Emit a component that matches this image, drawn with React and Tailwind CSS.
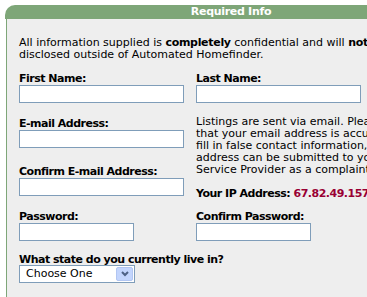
import React from 'react';

const font = { fontFamily: '"DejaVu Sans", Verdana, sans-serif' };

const Field = ({ className = '' }) => (
    <input
        type="text"
        className={`block h-[18px] border border-[#7f9db9] bg-white outline-none ${className}`}
    />
);

const Label = ({ children }) => (
    <div className="font-bold text-[11px] leading-[12px] tracking-[-0.5px] text-black">{children}</div>
);

const App = () => {
    return (
        <div className="w-[367px] h-[297px] overflow-hidden bg-white pt-[5px] pl-[5px]" style={font}>
            <div className="w-[452px]">
                <div className="h-[14px] bg-[#7ea678] rounded-tl-[10px] text-center text-white font-bold text-[11px] leading-[14px] tracking-[-0.3px]">
                    Required Info
                </div>
                <div className="ml-[1px] border-l border-[#7ea678] bg-[#eeeeee] pl-[12px] pt-[18px] pb-[20px] text-[11px] leading-[12px] text-black">
                    <p>
                        All information supplied is <b className="tracking-[-0.3px]">completely</b> confidential and will <b className="tracking-[-0.3px]">not</b> be<br />
                        disclosed outside of Automated Homefinder.
                    </p>

                    {/* name row */}
                    <div className="grid grid-cols-[177px_1fr] mt-[12px]">
                        <div>
                            <Label>First Name:</Label>
                            <Field className="w-[165px]" />
                        </div>
                        <div>
                            <Label>Last Name:</Label>
                            <Field className="w-[165px]" />
                        </div>
                    </div>

                    {/* email row */}
                    <div className="grid grid-cols-[177px_1fr] mt-[13px]">
                        <div className="pt-[2px]">
                            <Label>E-mail Address:</Label>
                            <Field className="w-[165px]" />
                            <div className="mt-[18px]">
                                <Label>Confirm E-mail Address:</Label>
                                <Field className="w-[165px]" />
                            </div>
                        </div>
                        <div>
                            <p className="whitespace-nowrap">
                                Listings are sent via email. Please be sure<br />
                                that your email address is accurate. If you<br />
                                fill in false contact information, your email<br />
                                address can be submitted to your Internet<br />
                                Service Provider as a complaint.
                            </p>
                            <p className="mt-[12px] font-bold tracking-[-0.5px] whitespace-nowrap">
                                Your IP Address: <span className="text-[#990033]">67.82.49.157</span>
                            </p>
                        </div>
                    </div>

                    {/* password row */}
                    <div className="grid grid-cols-[177px_1fr] mt-[11px]">
                        <div>
                            <Label>Password:</Label>
                            <Field className="w-[115px]" />
                        </div>
                        <div>
                            <Label>Confirm Password:</Label>
                            <Field className="w-[115px]" />
                        </div>
                    </div>

                    <div className="mt-[13px]">
                        <Label>What state do you currently live in?</Label>
                        <div className="mt-[-1px] w-[116px] h-[18px] border border-[#7f9db9] bg-white flex items-center justify-between pl-[6px] pr-[1px]">
                            <span className="text-[11px] leading-[12px]">Choose One</span>
                            <span className="w-[17px] h-[14px] bg-[#c3d5fd] border border-[#b2c6f2] rounded-[2px] flex items-center justify-center">
                                <svg width="8" height="6" viewBox="0 0 8 6">
                                    <path d="M1 1 L4 4 L7 1" fill="none" stroke="#4d6185" strokeWidth="2" />
                                </svg>
                            </span>
                        </div>
                    </div>
                </div>
            </div>
        </div>
    );
};

export default App;
